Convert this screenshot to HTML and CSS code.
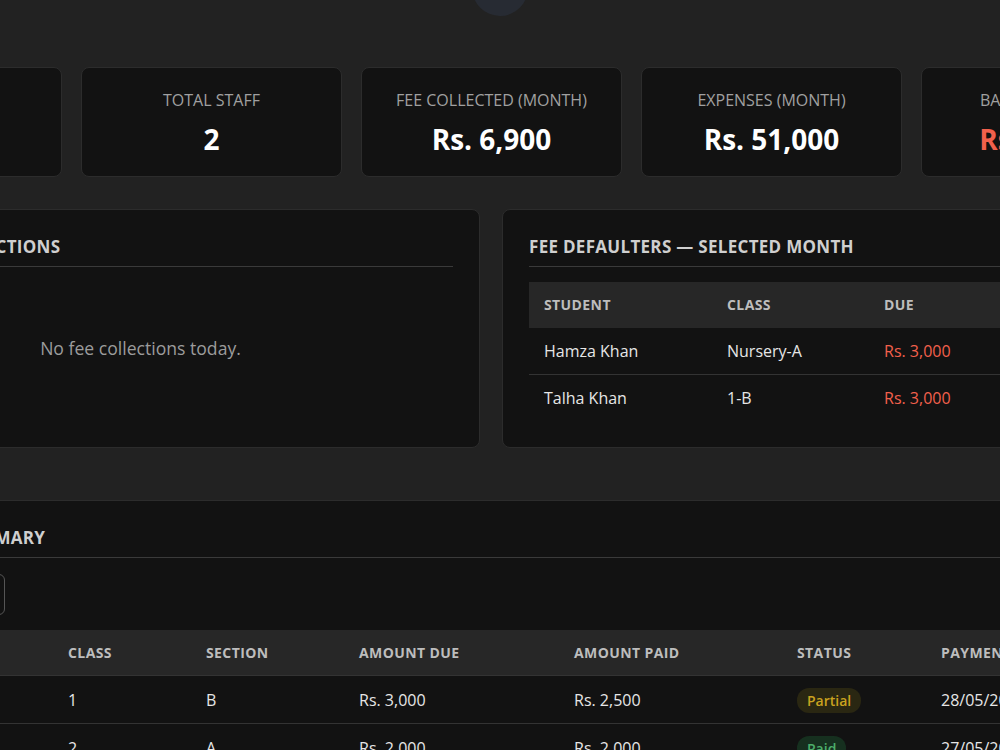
FILE: index.html
```html
<!DOCTYPE html>
<html lang="en">
<head>
    <meta charset="UTF-8">
    <meta name="viewport" content="width=device-width, initial-scale=1.0">
    <title>School Dashboard</title>
    <link rel="stylesheet" href="styles.css">
</head>
<body>
    <div class="top">
        <div class="logo-circle"></div>
    </div>

    <main class="dashboard">
        <div class="stats">
            <div class="stat-card">
                <div class="stat-label">Total Students</div>
                <div class="stat-value">3</div>
            </div>
            <div class="stat-card">
                <div class="stat-label">Total Staff</div>
                <div class="stat-value">2</div>
            </div>
            <div class="stat-card">
                <div class="stat-label">Fee Collected (Month)</div>
                <div class="stat-value">Rs. 6,900</div>
            </div>
            <div class="stat-card">
                <div class="stat-label">Expenses (Month)</div>
                <div class="stat-value">Rs. 51,000</div>
            </div>
            <div class="stat-card">
                <div class="stat-label">Balance (Month)</div>
                <div class="stat-value negative">Rs. -44,100</div>
            </div>
        </div>

        <div class="panels">
            <div class="panel">
                <h3>Today's Fee Collections</h3>
                <div class="empty">No fee collections today.</div>
            </div>
            <div class="panel">
                <h3>Fee Defaulters — Selected Month</h3>
                <table class="defaulters">
                    <thead>
                        <tr>
                            <th class="col-student">Student</th>
                            <th class="col-class">Class</th>
                            <th>Due</th>
                        </tr>
                    </thead>
                    <tbody>
                        <tr>
                            <td>Hamza Khan</td>
                            <td>Nursery-A</td>
                            <td class="due">Rs. 3,000</td>
                        </tr>
                        <tr>
                            <td>Talha Khan</td>
                            <td>1-B</td>
                            <td class="due">Rs. 3,000</td>
                        </tr>
                    </tbody>
                </table>
            </div>
        </div>

        <section class="panel summary">
            <h3>Monthly Fee Summary</h3>
            <div class="filter-row">
                <div class="month-select">May 2025 &#9662;</div>
            </div>
            <table class="summary-table">
                <thead>
                    <tr>
                        <th class="s-student">Student</th>
                        <th class="s-class">Class</th>
                        <th class="s-section">Section</th>
                        <th class="s-due">Amount Due</th>
                        <th class="s-paid">Amount Paid</th>
                        <th class="s-status">Status</th>
                        <th>Payment Date</th>
                    </tr>
                </thead>
                <tbody>
                    <tr>
                        <td>Ali Raza</td>
                        <td>1</td>
                        <td>B</td>
                        <td>Rs. 3,000</td>
                        <td>Rs. 2,500</td>
                        <td><span class="badge partial">Partial</span></td>
                        <td>28/05/2025</td>
                    </tr>
                    <tr>
                        <td>Sara Ahmed</td>
                        <td>2</td>
                        <td>A</td>
                        <td>Rs. 2,000</td>
                        <td>Rs. 2,000</td>
                        <td><span class="badge paid">Paid</span></td>
                        <td>27/05/2025</td>
                    </tr>
                </tbody>
            </table>
        </section>
    </main>
</body>
</html>
```

FILE: styles.css
```css
body {
    font-family: "Open Sans", "Noto Sans", sans-serif;
    margin: 0;
    padding: 0;
    background-color: #222222;
    color: #e4e4e4;
    overflow: hidden;
}

.top {
    display: flex;
    justify-content: center;
    height: 16px;
}

.logo-circle {
    width: 56px;
    height: 56px;
    border-radius: 50%;
    background-color: #272b33;
    margin-top: -40px;
    flex-shrink: 0;
}

.dashboard {
    width: 1380px;
    margin-left: -199px;
    padding-top: 51px;
}

.stats {
    display: grid;
    grid-template-columns: repeat(5, 261px);
    gap: 19px;
    margin-bottom: 32px;
}

.stat-card {
    background-color: #121212;
    border: 1px solid #2c2c2c;
    border-radius: 8px;
    padding: 22px 10px 20px;
    text-align: center;
}

.stat-label {
    font-size: 16px;
    line-height: 20px;
    color: #a0a0a0;
    text-transform: uppercase;
    margin-bottom: 12px;
}

.stat-value {
    font-size: 28px;
    line-height: 34px;
    font-weight: 700;
    color: #ffffff;
}

.stat-value.negative {
    color: #f2604c;
}

.panels {
    display: grid;
    grid-template-columns: 679px 679px;
    gap: 22px;
    margin-bottom: 52px;
}

.panel {
    background-color: #121212;
    border: 1px solid #2c2c2c;
    border-radius: 8px;
    padding: 26px;
}

.panel h3 {
    margin: 0;
    font-size: 17px;
    line-height: 22px;
    font-weight: 700;
    letter-spacing: 0.3px;
    text-transform: uppercase;
    color: #cfcfcf;
    padding-bottom: 8px;
    border-bottom: 1px solid #3a3a3a;
}

.empty {
    text-align: center;
    font-size: 17.6px;
    line-height: 24px;
    color: #9c9c9c;
    padding-top: 69px;
}

table {
    width: 100%;
    border-collapse: collapse;
    margin-top: 15px;
}

th, td {
    padding: 12px 15px;
    text-align: left;
    line-height: 22px;
}

th {
    background-color: #272727;
    color: #bdbdbd;
    font-size: 14px;
    font-weight: 700;
    letter-spacing: 0.4px;
    text-transform: uppercase;
}

td {
    font-size: 16px;
    color: #e6e6e6;
    border-bottom: 1px solid #333333;
}

tbody tr:last-child td {
    border-bottom: none;
}

.defaulters .col-student {
    width: 153px;
}

.defaulters .col-class {
    width: 127px;
}

.due {
    color: #f2604c;
}

.summary {
    border-radius: 0;
    padding-bottom: 40px;
}

.filter-row {
    padding-top: 16px;
}

.month-select {
    display: inline-block;
    width: 155px;
    height: 39px;
    line-height: 39px;
    border: 1px solid #555555;
    border-radius: 6px;
    padding: 0 10px;
    font-size: 15px;
    color: #dddddd;
}

.summary-table {
    margin-top: 15px;
}

.summary-table th {
    padding: 12px 15px 11px;
    border-bottom: 1px solid #333333;
}

.summary-table td {
    padding: 12px 15px 10px;
    line-height: 25px;
}

.summary-table tbody tr:last-child td {
    border-bottom: 1px solid #333333;
}

.s-student { width: 195px; }
.s-class { width: 108px; }
.s-section { width: 123px; }
.s-due { width: 185px; }
.s-paid { width: 193px; }
.s-status { width: 114px; }

.badge {
    display: inline-block;
    vertical-align: top;
    padding: 0 10px;
    border-radius: 12px;
    font-size: 14px;
    line-height: 25px;
    font-weight: 600;
}

.badge.partial {
    background-color: #2a2712;
    color: #c9a21f;
}

.badge.paid {
    background-color: #16301f;
    color: #4cae6a;
}
```
